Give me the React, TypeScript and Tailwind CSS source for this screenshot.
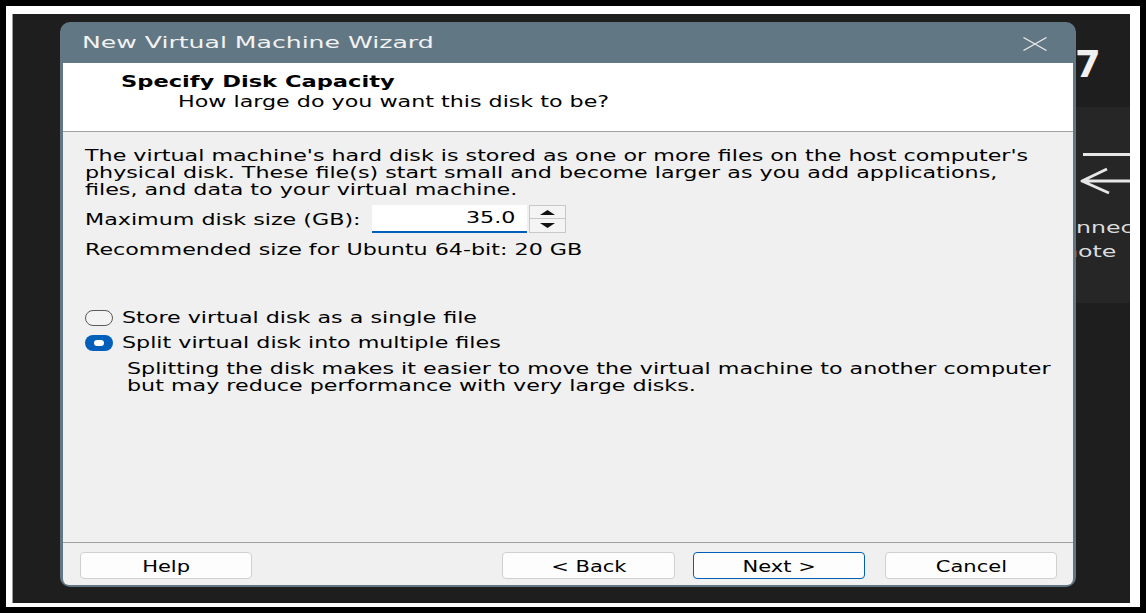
import React from "react";

type TextProps = { children: React.ReactNode; className?: string };

// The reference is drawn wide, so glyphs are stretched horizontally
function Wide({ children, className = "" }: TextProps) {
  return (
    <div className={"whitespace-nowrap " + className}>
      <span className="inline-block origin-left scale-x-[1.48]">{children}</span>
    </div>
  );
}

function Radio({ checked, label }: { checked: boolean; label: string }) {
  return (
    <div className="flex h-[17px] items-center">
      {checked ? (
        <span className="flex h-[16px] w-[28px] items-center justify-center rounded-full bg-[#005fb8]">
          <span className="h-[6px] w-[10px] rounded-full bg-white" />
        </span>
      ) : (
        <span className="h-[16px] w-[28px] rounded-full border border-[#5a5a5a] bg-[#f3f3f3]" />
      )}
      <Wide className="ml-[9px] pt-[2px] text-[15px] leading-[17px]">{label}</Wide>
    </div>
  );
}

function Button({ label, primary = false, className = "" }: { label: string; primary?: boolean; className?: string }) {
  return (
    <button
      className={
        "flex h-[27px] items-center justify-center rounded-[4px] bg-[#fdfdfd] pt-[3px] text-[15px] text-black " +
        (primary ? "border border-[#005fb8] " : "border border-[#d0d0d0] ") +
        className
      }
    >
      <span className="inline-block scale-x-[1.4] whitespace-nowrap">{label}</span>
    </button>
  );
}

export default function App() {
  return (
    <div className="h-[613px] w-[1146px] bg-black p-[6px] font-['DejaVu_Sans',sans-serif]">
      <div className="h-full w-full bg-white pb-[4px] pl-[6px] pr-[10px] pt-[8px]">
        <div className="flex h-full w-full items-start border-l border-[#9a9a9a] bg-[#1e1e1e] pl-[47px]">
          {/* wizard dialog */}
          <div className="mt-[8px] flex h-[565px] w-[1016px] shrink-0 flex-col rounded-[10px] bg-[#627784] px-[3px] pb-[2px]">
            <div className="flex h-[41px] shrink-0 items-center justify-between pl-[19px] pr-[26px]">
              <div className="whitespace-nowrap text-[16px] text-[#f2f2f2]">
                <span className="inline-block origin-left scale-x-[1.57]">New Virtual Machine Wizard</span>
              </div>
              <svg width="24" height="14" viewBox="0 0 24 14" className="mt-[2px]">
                <path d="M0.5 0.5 L23.5 13.5 M23.5 0.5 L0.5 13.5" stroke="#e8e8e8" strokeWidth="1.3" fill="none" />
              </svg>
            </div>

            <div className="flex flex-1 flex-col overflow-hidden rounded-b-[6px] bg-[#f0f0f0] text-black">
              <div className="h-[69px] shrink-0 border-b border-[#a0a0a0] bg-white pl-[58px] pt-[9px]">
                <div className="whitespace-nowrap text-[16px] font-bold leading-[20px]">
                  <span className="inline-block origin-left scale-x-[1.41]">Specify Disk Capacity</span>
                </div>
                <Wide className="pl-[57px] text-[15px] leading-[20px]">How large do you want this disk to be?</Wide>
              </div>

              <div className="flex-1 pl-[22px] pt-[16px] text-[15px] leading-[17px]">
                <Wide>The virtual machine's hard disk is stored as one or more files on the host computer's</Wide>
                <Wide>physical disk. These file(s) start small and become larger as you add applications,</Wide>
                <Wide>files, and data to your virtual machine.</Wide>

                <div className="mt-[6px] flex h-[28px] items-center">
                  <Wide className="w-[287px] pt-[2px]">Maximum disk size (GB):</Wide>
                  <div className="flex h-[28px] w-[155px] items-center justify-end border-b-2 border-[#005fb8] bg-white pr-[12px]">
                    <span className="inline-block origin-right scale-x-[1.48]">35.0</span>
                  </div>
                  <div className="ml-[2px] flex h-[28px] w-[37px] flex-col">
                    <div className="flex h-[14px] items-center justify-center border border-[#c8c8c8] bg-[#f4f4f4]">
                      <svg width="15" height="5" viewBox="0 0 15 5">
                        <path d="M7.5 0 L15 5 L0 5 Z" fill="#111" />
                      </svg>
                    </div>
                    <div className="flex h-[14px] items-center justify-center border border-t-0 border-[#c8c8c8] bg-[#f4f4f4]">
                      <svg width="15" height="5" viewBox="0 0 15 5">
                        <path d="M0 0 L15 0 L7.5 5 Z" fill="#111" />
                      </svg>
                    </div>
                  </div>
                </div>

                <Wide className="mt-[9px]">Recommended size for Ubuntu 64-bit: 20 GB</Wide>

                <div className="mt-[50px]">
                  <Radio checked={false} label="Store virtual disk as a single file" />
                </div>
                <div className="mt-[8px]">
                  <Radio checked label="Split virtual disk into multiple files" />
                </div>
                <div className="mt-[10px] pl-[42px]">
                  <Wide>Splitting the disk makes it easier to move the virtual machine to another computer</Wide>
                  <Wide>but may reduce performance with very large disks.</Wide>
                </div>
              </div>

              <div className="flex h-[43px] shrink-0 items-start border-t border-[#a0a0a0] pl-[17px] pr-[16px] pt-[9px]">
                <Button label="Help" className="w-[172px]" />
                <Button label="< Back" className="ml-auto w-[173px]" />
                <Button label="Next >" primary className="ml-[18px] w-[172px]" />
                <Button label="Cancel" className="ml-[20px] w-[172px]" />
              </div>
            </div>
          </div>

          {/* part of the application window behind the dialog */}
          <div className="flex flex-1 flex-col self-stretch overflow-hidden">
            <div className="h-[93px] shrink-0 pt-[32px]">
              <div className="-ml-[1px] text-[37px] font-bold leading-none text-[#f0f0f0]">7</div>
            </div>
            <div className="h-[196px] shrink-0 bg-[#262626] pt-[37px]">
              <svg width="54" height="52" viewBox="0 0 54 52">
                <path d="M7 10.5 H54" stroke="#e6e6e6" strokeWidth="3" fill="none" />
                <path d="M6 37 H54 M31 25 L6 37 L33 49" stroke="#e6e6e6" strokeWidth="3" fill="none" strokeLinejoin="round" />
              </svg>
              <div className="mt-[20px] text-[16px] leading-[24px] text-[#dcdcdc]">
                <div className="-ml-[31px] whitespace-nowrap">
                  <span className="inline-block origin-left scale-x-[1.48]">Connected</span>
                </div>
                <div className="-ml-[51px] whitespace-nowrap">
                  <span className="inline-block origin-left scale-x-[1.48]">Remote</span>
                </div>
              </div>
            </div>
          </div>
        </div>
      </div>
    </div>
  );
}
